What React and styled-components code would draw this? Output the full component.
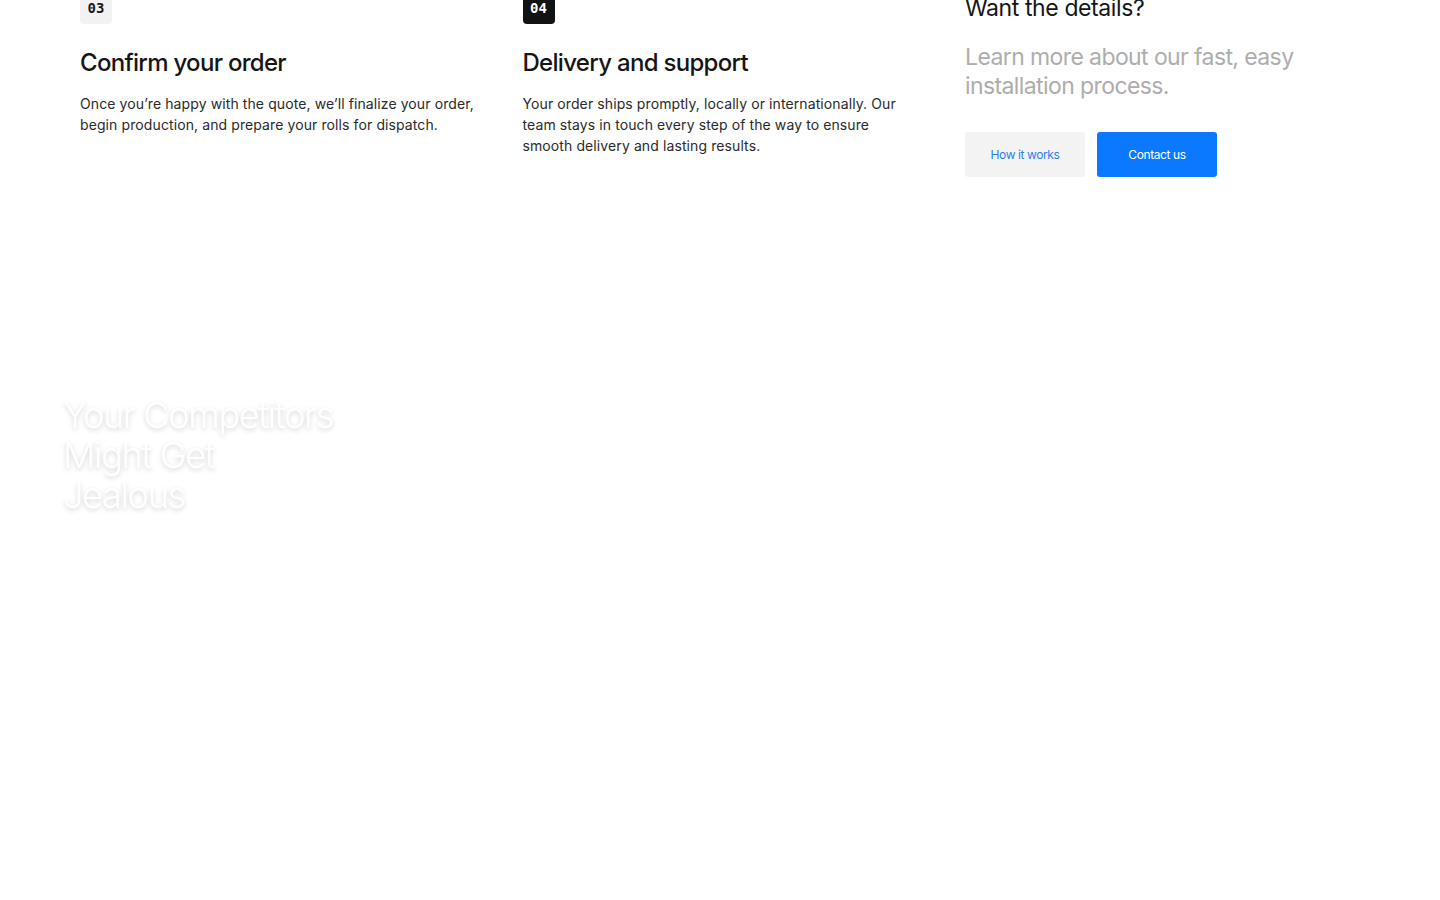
import React from "react";
import styled, { createGlobalStyle } from "styled-components";

const GlobalStyle = createGlobalStyle`
  * { box-sizing: border-box; }
  html, body { margin: 0; padding: 0; background: #ffffff; }
  body {
    font-family: Inter, "Noto Sans", sans-serif;
    color: #151515;
    -webkit-font-smoothing: antialiased;
  }
`;

const Page = styled.div`
  width: 1440px;
  height: 900px;
  overflow: hidden;
  display: flex;
  flex-direction: column;
`;

const Steps = styled.section`
  margin-top: -7px;
  padding: 0 80px;
  display: grid;
  grid-template-columns: repeat(3, 395px);
  column-gap: 47.5px;
`;

const Step = styled.div`
  display: flex;
  flex-direction: column;
  align-items: flex-start;
`;

const Badge = styled.span`
  height: 31px;
  min-width: 32px;
  padding: 0 7px 2px;
  border-radius: 4px;
  display: flex;
  align-items: center;
  justify-content: center;
  font-family: "DejaVu Sans Mono", "Liberation Mono", monospace;
  font-size: 14px;
  font-weight: 700;
  background: ${(p) => (p.$dark ? "#111214" : "#f2f2f2")};
  color: ${(p) => (p.$dark ? "#ffffff" : "#1a1a1a")};
`;

const StepTitle = styled.h3`
  margin: 23px 0 0;
  font-size: 24px;
  line-height: 32px;
  font-weight: 500;
  letter-spacing: -0.7px;
  color: #151515;
`;

const StepText = styled.p`
  margin: 14px 0 0;
  font-size: 14px;
  line-height: 21px;
  letter-spacing: 0.1px;
  color: #2a2a2a;
`;

const Cta = styled.div`
  display: flex;
  flex-direction: column;
  align-items: flex-start;
`;

const CtaTitle = styled.h3`
  margin: 0;
  font-size: 23px;
  line-height: 30px;
  font-weight: 400;
  letter-spacing: -0.4px;
  color: #151515;
`;

const CtaLead = styled.p`
  margin: 20px 0 0;
  font-size: 23px;
  line-height: 29px;
  font-weight: 400;
  letter-spacing: -0.6px;
  color: #adadad;
`;

const Buttons = styled.div`
  margin-top: 31px;
  display: flex;
  gap: 12px;
`;

const Button = styled.button`
  width: 120px;
  height: 45px;
  border: 0;
  border-radius: 3px;
  font-family: Inter, "Noto Sans", sans-serif;
  font-size: 12px;
  font-weight: 400;
  letter-spacing: -0.4px;
  cursor: pointer;
  background: ${(p) => (p.$primary ? "#0a78ff" : "#f3f3f3")};
  color: ${(p) => (p.$primary ? "#ffffff" : "#2a7ff0")};
`;

const Hero = styled.section`
  padding: 218px 63px 0;
`;

const HeroTitle = styled.h1`
  margin: 0;
  width: 280px;
  font-size: 36px;
  line-height: 40px;
  font-weight: 300;
  letter-spacing: -1.3px;
  color: #ffffff;
  text-shadow: 0 2px 5px rgba(0, 0, 0, 0.18);
`;

const steps = [
  {
    n: "03",
    title: "Confirm your order",
    text: "Once you’re happy with the quote, we’ll finalize your order, begin production, and prepare your rolls for dispatch.",
  },
  {
    n: "04",
    dark: true,
    title: "Delivery and support",
    text: "Your order ships promptly, locally or internationally. Our team stays in touch every step of the way to ensure smooth delivery and lasting results.",
  },
];

export default function App() {
  return (
    <>
      <GlobalStyle />
      <Page>
        <Steps>
          {steps.map((s) => (
            <Step key={s.n}>
              <Badge $dark={s.dark}>{s.n}</Badge>
              <StepTitle>{s.title}</StepTitle>
              <StepText>{s.text}</StepText>
            </Step>
          ))}
          <Cta>
            <CtaTitle>Want the details?</CtaTitle>
            <CtaLead>Learn more about our fast, easy installation process.</CtaLead>
            <Buttons>
              <Button>How it works</Button>
              <Button $primary>Contact us</Button>
            </Buttons>
          </Cta>
        </Steps>
        <Hero>
          <HeroTitle>Your Competitors Might Get Jealous</HeroTitle>
        </Hero>
      </Page>
    </>
  );
}
